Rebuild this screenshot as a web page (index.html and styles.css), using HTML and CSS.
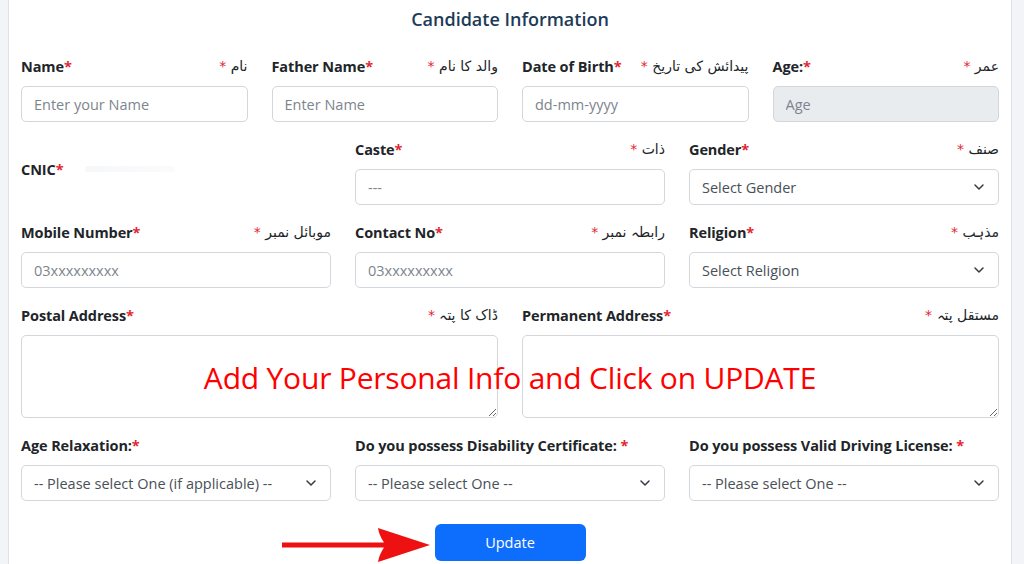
FILE: index.html
```html
<!DOCTYPE html>
<html lang="en">
<head>
<meta charset="utf-8">
<title>Candidate Information</title>
<link rel="stylesheet" href="styles.css">
</head>
<body>
<div class="page">
  <div class="panel">
    <h2 class="title">Candidate Information</h2>

    <div class="grid cols-4">
      <div class="field">
        <div class="lbl"><span class="en">Name<span class="req">*</span></span><span class="ur" dir="rtl">نام <span class="req">*</span></span></div>
        <input class="ctl" type="text" placeholder="Enter your Name">
      </div>
      <div class="field">
        <div class="lbl"><span class="en">Father Name<span class="req">*</span></span><span class="ur" dir="rtl">والد کا نام <span class="req">*</span></span></div>
        <input class="ctl" type="text" placeholder="Enter Name">
      </div>
      <div class="field">
        <div class="lbl"><span class="en">Date of Birth<span class="req">*</span></span><span class="ur" dir="rtl">پیدائش کی تاریخ <span class="req">*</span></span></div>
        <input class="ctl" type="text" placeholder="dd-mm-yyyy">
      </div>
      <div class="field">
        <div class="lbl"><span class="en">Age:<span class="req">*</span></span><span class="ur" dir="rtl">عمر <span class="req">*</span></span></div>
        <input class="ctl disabled" type="text" placeholder="Age" disabled>
      </div>
    </div>

    <div class="grid cols-3">
      <div class="field">
        <div class="lbl cnic"><span class="en">CNIC<span class="req">*</span></span><span class="blur">&nbsp;</span></div>
      </div>
      <div class="field">
        <div class="lbl"><span class="en">Caste<span class="req">*</span></span><span class="ur" dir="rtl">ذات <span class="req">*</span></span></div>
        <input class="ctl" type="text" placeholder="---">
      </div>
      <div class="field">
        <div class="lbl"><span class="en">Gender<span class="req">*</span></span><span class="ur" dir="rtl">صنف <span class="req">*</span></span></div>
        <div class="ctl select"><span>Select Gender</span><svg class="chev" width="12" height="8" viewBox="0 0 12 8"><path d="M2 2 6 6l4-4" fill="none" stroke="#343a40" stroke-width="1.5" stroke-linecap="round" stroke-linejoin="round"/></svg></div>
      </div>

      <div class="field">
        <div class="lbl"><span class="en">Mobile Number<span class="req">*</span></span><span class="ur" dir="rtl">موبائل نمبر <span class="req">*</span></span></div>
        <input class="ctl" type="text" placeholder="03xxxxxxxxx">
      </div>
      <div class="field">
        <div class="lbl"><span class="en">Contact No<span class="req">*</span></span><span class="ur" dir="rtl">رابطہ نمبر <span class="req">*</span></span></div>
        <input class="ctl" type="text" placeholder="03xxxxxxxxx">
      </div>
      <div class="field">
        <div class="lbl"><span class="en">Religion<span class="req">*</span></span><span class="ur" dir="rtl">مذہب <span class="req">*</span></span></div>
        <div class="ctl select"><span>Select Religion</span><svg class="chev" width="12" height="8" viewBox="0 0 12 8"><path d="M2 2 6 6l4-4" fill="none" stroke="#343a40" stroke-width="1.5" stroke-linecap="round" stroke-linejoin="round"/></svg></div>
      </div>
    </div>

    <div class="grid cols-2">
      <div class="field">
        <div class="lbl"><span class="en">Postal Address<span class="req">*</span></span><span class="ur" dir="rtl">ڈاک کا پتہ <span class="req">*</span></span></div>
        <textarea class="ctl area"></textarea>
      </div>
      <div class="field">
        <div class="lbl"><span class="en">Permanent Address<span class="req">*</span></span><span class="ur" dir="rtl">مستقل پتہ <span class="req">*</span></span></div>
        <textarea class="ctl area"></textarea>
      </div>
    </div>

    <div class="grid cols-3">
      <div class="field">
        <div class="lbl"><span class="en">Age Relaxation:<span class="req">*</span></span></div>
        <div class="ctl select"><span>-- Please select One (if applicable) --</span><svg class="chev" width="12" height="8" viewBox="0 0 12 8"><path d="M2 2 6 6l4-4" fill="none" stroke="#343a40" stroke-width="1.5" stroke-linecap="round" stroke-linejoin="round"/></svg></div>
      </div>
      <div class="field">
        <div class="lbl"><span class="en">Do you possess Disability Certificate: <span class="req">*</span></span></div>
        <div class="ctl select"><span>-- Please select One --</span><svg class="chev" width="12" height="8" viewBox="0 0 12 8"><path d="M2 2 6 6l4-4" fill="none" stroke="#343a40" stroke-width="1.5" stroke-linecap="round" stroke-linejoin="round"/></svg></div>
      </div>
      <div class="field">
        <div class="lbl"><span class="en">Do you possess Valid Driving License: <span class="req">*</span></span></div>
        <div class="ctl select"><span>-- Please select One --</span><svg class="chev" width="12" height="8" viewBox="0 0 12 8"><path d="M2 2 6 6l4-4" fill="none" stroke="#343a40" stroke-width="1.5" stroke-linecap="round" stroke-linejoin="round"/></svg></div>
      </div>
    </div>

    <div class="actions">
      <button class="btn" type="button">Update</button>
    </div>

    <div class="note">Add Your Personal Info and Click on UPDATE</div>
    <svg class="arrow" width="150" height="36" viewBox="0 0 150 36"><path d="M0 15.5H102Q97 8 96 1L148 18 96 35Q97 28 102 20.5H0Z" fill="#ee1111"/></svg>
  </div>
</div>
</body>
</html>
```
FILE: styles.css
```css
html, body {
  margin: 0;
  padding: 0;
}
body {
  background: #f3f4f7;
  font-family: "Open Sans", "Liberation Sans", sans-serif;
  color: #212529;
}
.page {
  padding-left: 8px;
  width: 1004px;
}
.panel {
  position: relative;
  background: #fff;
  border-left: 1px solid #dfe2e6;
  border-right: 1px solid #dfe2e6;
  padding: 6px 12px 10px;
  height: 548px;
}
.title {
  margin: 0 0 22px;
  text-align: center;
  font-size: 18px;
  line-height: 27px;
  font-weight: 600;
  color: #1d3b58;
}
.grid {
  display: grid;
  column-gap: 24px;
}
.cols-4 { grid-template-columns: repeat(4, 1fr); }
.cols-3 { grid-template-columns: repeat(3, 1fr); }
.cols-2 { grid-template-columns: repeat(2, 1fr); }
.field {
  margin-bottom: 16px;
  min-width: 0;
}
.lbl {
  display: flex;
  justify-content: space-between;
  align-items: center;
  height: 22px;
  margin-bottom: 9px;
  white-space: nowrap;
}
.lbl.cnic {
  padding-top: 20px;
  justify-content: flex-start;
}
.en {
  font-size: 14.5px;
  font-weight: 700;
  color: #212529;
  letter-spacing: -0.1px;
}
.ur {
  font-family: "DejaVu Sans", sans-serif;
  font-size: 14px;
  color: #212529;
}
.req {
  color: #e3262f;
}
.blur {
  display: inline-block;
  width: 90px;
  height: 6px;
  margin-left: 22px;
  background: linear-gradient(90deg, #f6f7f9, #fbfbfc);
  border-radius: 3px;
}
.ctl {
  display: block;
  box-sizing: border-box;
  width: 100%;
  height: 36px;
  margin: 0;
  padding: 0 12px;
  border: 1px solid #d3d7dc;
  border-radius: 5px;
  background: #fff;
  font-family: "Open Sans", "Liberation Sans", sans-serif;
  font-size: 14.5px;
  color: #212529;
  outline: none;
}
.ctl::placeholder {
  color: #7d858d;
}
.ctl.disabled {
  background: #e9ecef;
}
.select {
  display: flex;
  align-items: center;
  justify-content: space-between;
  padding-right: 13px;
  color: #495057;
}
.select span {
  white-space: nowrap;
}
.area {
  height: 83px;
  resize: vertical;
  padding: 6px 12px;
}
.actions {
  display: flex;
  justify-content: center;
  padding-top: 7px;
}
.btn {
  width: 151px;
  height: 37px;
  border: 0;
  border-radius: 6px;
  background: #0d6efd;
  color: #fff;
  font-family: "Open Sans", "Liberation Sans", sans-serif;
  font-size: 14.5px;
}
.note {
  position: absolute;
  left: 0;
  right: 0;
  top: 358px;
  text-align: center;
  font-family: "Open Sans", "Liberation Sans", sans-serif;
  font-size: 30px;
  line-height: 40px;
  color: #ff0000;
  letter-spacing: -0.2px;
  pointer-events: none;
}
.arrow {
  position: absolute;
  left: 273px;
  top: 527px;
}
```
